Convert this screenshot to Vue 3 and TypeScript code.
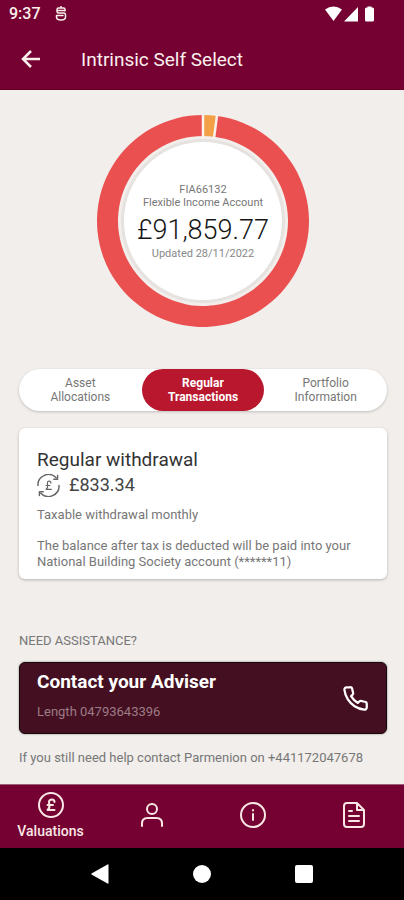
<script setup lang="ts">
import { ref } from 'vue'

interface Segment {
  label: string
  colour: string
  start: number
  share: number
}

const segments: Segment[] = [
  { label: 'Cash', colour: '#f4a046', start: 0, share: 2.1 },
  { label: 'Investments', colour: '#ea5050', start: 2.1, share: 97.9 },
]

const tabs: string[][] = [
  ['Asset', 'Allocations'],
  ['Regular', 'Transactions'],
  ['Portfolio', 'Information'],
]
const activeTab = ref(1)

function point(share: number, radius: number): string {
  const angle = (share / 100) * Math.PI * 2
  return `${106 + radius * Math.sin(angle)} ${106 - radius * Math.cos(angle)}`
}

// Outline of one ring segment, clockwise from the top of the circle.
function ringPath(s: Segment): string {
  const end = s.start + s.share
  const large = s.share > 50 ? 1 : 0
  return (
    `M${point(s.start, 106)} A106 106 0 ${large} 1 ${point(end, 106)} ` +
    `L${point(end, 85)} A85 85 0 ${large} 0 ${point(s.start, 85)} Z`
  )
}

function divider(share: number): string {
  return `M${point(share, 84)} L${point(share, 107)}`
}
</script>

<template>
  <div class="app">
    <header class="top">
      <div class="status">
        <span class="time">9:37</span>
        <svg class="status-logo" viewBox="0 0 12 16" aria-hidden="true">
          <path d="M10 5V3.500Q10 2 8.500 2H3.500Q2 2 2 3.500V5.500Q2 7 3.500 7H8.500Q10.500 7 10.500 9V11Q10.500 14 6 14Q1.500 14 1.500 11V10M2.500 4.500H9.500M1.500 9.500H8M6 0V2" />
        </svg>
        <svg class="signals" viewBox="0 0 50 16" aria-hidden="true">
          <path d="M0 3.500Q8.500-2.500 17 3.500L8.500 15ZM33 1V15.500H19ZM40 3Q40 1.500 41.500 1.500H42.500V0.500H46.500V1.500H47.500Q49 1.500 49 3V14Q49 15.500 47.500 15.500H41.500Q40 15.500 40 14Z" />
        </svg>
      </div>
      <div class="bar">
        <button class="back" type="button" aria-label="Back">
          <svg viewBox="0 0 20 20"><path d="M19 10H2M10 2L2 10L10 18" /></svg>
        </button>
        <h1>Intrinsic Self Select</h1>
      </div>
    </header>

    <main>
      <section class="chart">
        <svg class="ring" viewBox="0 0 212 212" aria-hidden="true">
          <path v-for="s in segments" :key="s.label" :d="ringPath(s)" :fill="s.colour" />
          <path v-for="s in segments" :key="s.start" class="divider" :d="divider(s.start)" />
        </svg>
        <div class="disc">
          <p>FIA66132</p>
          <p>Flexible Income Account</p>
          <p class="total">£91,859.77</p>
          <p class="updated">Updated 28/11/2022</p>
        </div>
      </section>

      <div class="tabs" role="tablist">
        <button
          v-for="(tab, i) in tabs"
          :key="tab[0]"
          type="button"
          role="tab"
          :aria-selected="activeTab === i"
          :class="{ active: activeTab === i }"
          @click="activeTab = i"
        >
          {{ tab[0] }}<br />{{ tab[1] }}
        </button>
      </div>

      <section class="card">
        <h2>Regular withdrawal</h2>
        <div class="amount">
          <svg viewBox="0 0 24 24" aria-hidden="true">
            <path d="M1 12A11 11 0 0 1 20 4M23 12A11 11 0 0 1 4 20" />
            <path d="M21.500 1.500V5.500H17.500M2.500 22.500V18.500H6.500" />
            <path class="pound" d="M14.500 9.500Q14.500 7.500 12.700 7.500Q10.800 7.500 10.800 9.500Q10.800 10.500 11.200 12Q11.500 14.500 9.500 16H15M9.500 12H13.500" />
          </svg>
          <span>£833.34</span>
        </div>
        <p class="kind">Taxable withdrawal monthly</p>
        <p>The balance after tax is deducted will be paid into your National Building Society account (******11)</p>
      </section>

      <section class="help">
        <h3>NEED ASSISTANCE?</h3>
        <a class="adviser" href="tel:04793643396">
          <span class="adviser-text">
            <strong>Contact your Adviser</strong>
            <span>Length 04793643396</span>
          </span>
          <svg viewBox="0 0 24 24" aria-hidden="true">
            <path d="M22 16.920v3a2 2 0 0 1-2.180 2 19.790 19.790 0 0 1-8.630-3.070 19.500 19.500 0 0 1-6-6 19.790 19.790 0 0 1-3.070-8.670A2 2 0 0 1 4.110 2h3a2 2 0 0 1 2 1.720 12.840 12.840 0 0 0 .7 2.810 2 2 0 0 1-.45 2.110L8.090 9.910a16 16 0 0 0 6 6l1.270-1.270a2 2 0 0 1 2.110-.45 12.840 12.840 0 0 0 2.810.7A2 2 0 0 1 22 16.920z" />
          </svg>
        </a>
        <p>If you still need help contact Parmenion on +441172047678</p>
      </section>
    </main>

    <nav class="tabbar">
      <a href="#valuations" class="current">
        <svg viewBox="0 0 28 28" aria-hidden="true">
          <circle cx="14" cy="14" r="12" />
          <path d="M17.500 11Q17.500 8.500 15 8.500Q12 8.500 12 11Q12 12 12.400 14Q12.800 17.500 10.500 19H17.500M10.500 14H16" />
        </svg>
        <span>Valuations</span>
      </a>
      <a href="#profile" aria-label="Profile">
        <svg viewBox="0 0 28 28" aria-hidden="true">
          <circle cx="14" cy="8" r="5" />
          <path d="M4 25V22.500Q4 17 9.500 17H18.500Q24 17 24 22.500V25" />
        </svg>
      </a>
      <a href="#information" aria-label="Information">
        <svg viewBox="0 0 28 28" aria-hidden="true">
          <circle cx="14" cy="14" r="12" />
          <path d="M14 13V19M14 9V9.500" />
        </svg>
      </a>
      <a href="#documents" aria-label="Documents">
        <svg viewBox="0 0 28 28" aria-hidden="true">
          <path d="M17 2H7Q4 2 4 5V23Q4 26 7 26H21Q24 26 24 23V9ZM17 2V9H24M9 10H12M9 15H19M9 20H19" />
        </svg>
      </a>
    </nav>

    <div class="system">
      <button type="button" aria-label="System back">
        <svg viewBox="0 0 20 20"><path d="M18.500 1V19Q18.500 20 17.500 19.500L1.500 10.500Q1 10 1.500 9.500L17.500 0.500Q18.500 0 18.500 1Z" /></svg>
      </button>
      <button type="button" aria-label="Home">
        <svg viewBox="0 0 20 20"><circle cx="10" cy="10" r="9" /></svg>
      </button>
      <button type="button" aria-label="Recent apps">
        <svg viewBox="0 0 20 20"><rect x="1" y="1" width="18" height="18" rx="2" /></svg>
      </button>
    </div>
  </div>
</template>

<style>
body {
  margin: 0;
  background: #f1eeeb;
}
</style>

<style scoped>
.app {
  display: flex;
  flex-direction: column;
  min-height: 100vh;
  background: #f1eeeb;
  color: #777;
  font-family: Roboto, "Liberation Sans", sans-serif;
  font-size: 13px;
  line-height: 16px;
}
h1, h2, h3, p {
  margin: 0;
  font-weight: 400;
}
button {
  margin: 0;
  padding: 0;
  border: 0;
  background: none;
  color: inherit;
  font: inherit;
}
a {
  color: inherit;
  text-decoration: none;
}
svg {
  display: block;
  flex: none;
  fill: none;
  stroke: currentColor;
  stroke-linecap: round;
  stroke-linejoin: round;
}
.top {
  background: #750032;
  border-bottom: 1px solid #650022;
  color: #faf0ec;
}
.status {
  display: flex;
  align-items: center;
  height: 28px;
  padding: 0 29px 0 9px;
}
.time {
  font-size: 16px;
  font-weight: 500;
}
.status-logo {
  width: 12px;
  height: 16px;
  margin-left: 14px;
  stroke-width: 1.500;
}
.signals {
  width: 50px;
  height: 16px;
  margin-left: auto;
  fill: #fff;
  stroke: none;
}
.bar {
  display: flex;
  align-items: center;
  gap: 40px;
  height: 61px;
  padding: 0 21px;
}
.back svg {
  width: 20px;
  height: 20px;
  stroke-width: 2.500;
  stroke-linecap: butt;
  stroke-linejoin: miter;
}
h1 {
  padding-top: 2px;
  font-size: 19px;
  line-height: 24px;
}
main {
  display: flex;
  flex: 1;
  flex-direction: column;
  padding: 25px 17px 16px 19px;
}
.chart {
  display: grid;
  place-items: center;
}
.chart > * {
  grid-area: 1 / 1;
}
.ring {
  width: 212px;
  height: 212px;
  stroke: none;
}
.ring .divider {
  stroke: #fbf3ea;
  stroke-width: 2.500;
}
.disc {
  display: flex;
  flex-direction: column;
  align-items: center;
  justify-content: center;
  box-sizing: border-box;
  width: 164px;
  height: 164px;
  border: 3px solid #e5e2e0;
  border-radius: 50%;
  background: #fff;
  font-size: 11px;
  line-height: 13px;
  white-space: nowrap;
}
.total {
  margin: 5px 0 1px;
  color: #151515;
  font-size: 27px;
  font-weight: 300;
  line-height: 32px;
}
.updated {
  color: #888;
}
.tabs {
  display: grid;
  grid-template-columns: repeat(3, 1fr);
  margin-top: 42px;
  border-radius: 21px;
  background: #fff;
  box-shadow: 0 1px 3px #00000033;
}
.tabs button {
  height: 42px;
  border-radius: 21px;
  font-size: 12px;
  line-height: 14px;
}
.tabs .active {
  background: #b9172d;
  color: #fff;
  font-weight: 700;
}
.card {
  margin-top: 17px;
  padding: 20px 18px 9px;
  border-radius: 6px;
  background: #fff;
  box-shadow: 0 1px 3px #00000040;
}
h2 {
  color: #333;
  font-size: 19px;
  line-height: 24px;
}
.amount {
  display: flex;
  align-items: center;
  gap: 9px;
  height: 26px;
  color: #444;
  font-size: 18px;
}
.amount svg {
  width: 23px;
  height: 23px;
  stroke: #666;
  stroke-width: 1.500;
}
.amount .pound {
  stroke-width: 1.200;
}
.kind {
  margin: 9px 0 15px;
}
.help {
  display: flex;
  flex-direction: column;
  margin-top: 53px;
}
h3 {
  font-size: 13px;
  line-height: 18px;
}
.adviser {
  display: flex;
  align-items: center;
  justify-content: space-between;
  box-sizing: border-box;
  height: 72px;
  margin: 12px 0 16px;
  padding: 0 17px;
  border: 1px solid #18070d;
  border-radius: 6px;
  background: #441021;
  color: #fff;
  box-shadow: 0 0 2px #00000080;
}
.adviser-text {
  display: flex;
  flex-direction: column;
  gap: 12px;
  padding-bottom: 4px;
  color: #9d7b86;
}
.adviser strong {
  color: #fff;
  font-size: 19px;
  font-weight: 700;
  line-height: 20px;
}
.adviser svg {
  width: 27px;
  height: 27px;
  stroke-width: 2;
}
.tabbar {
  display: grid;
  grid-template-columns: repeat(4, 1fr);
  box-sizing: border-box;
  height: 64px;
  padding-bottom: 4px;
  border-top: 1px solid #9d6077;
  background: #750032;
  color: #f8e7e4;
}
.tabbar a {
  display: flex;
  flex-direction: column;
  align-items: center;
  justify-content: center;
  gap: 4px;
}
.tabbar svg {
  width: 28px;
  height: 28px;
  stroke-width: 2;
}
.tabbar span {
  font-size: 14px;
  font-weight: 500;
}
.system {
  display: flex;
  justify-content: center;
  align-items: center;
  gap: 82px;
  height: 52px;
  background: #000;
  color: #fff;
}
.system svg {
  width: 20px;
  height: 20px;
  fill: currentColor;
  stroke: none;
}
</style>
